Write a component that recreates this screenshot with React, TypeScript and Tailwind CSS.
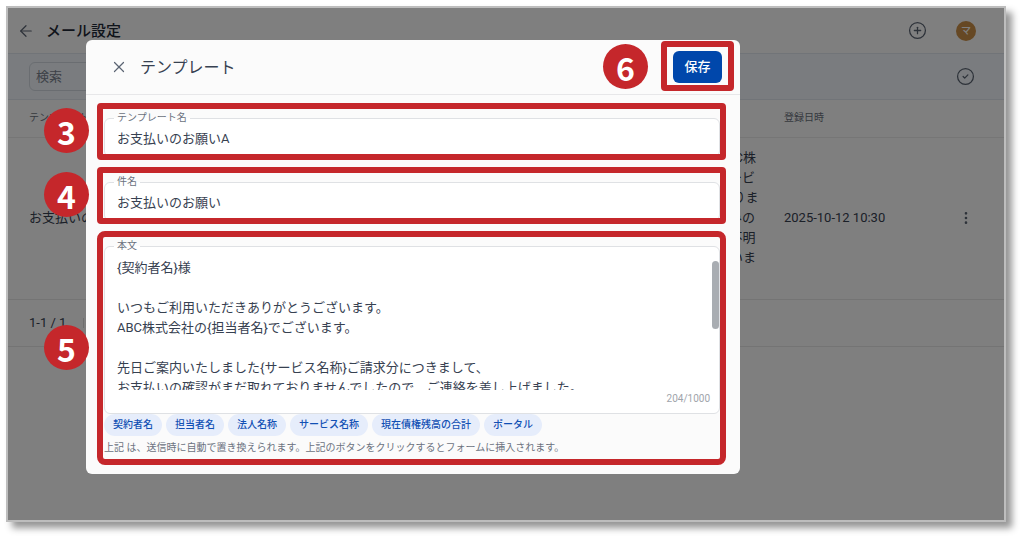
import type { ReactNode } from "react";
import { ArrowLeft, CircleCheck, CirclePlus, EllipsisVertical, X } from "lucide-react";

const placeholders = [
  "契約者名",
  "担当者名",
  "法人名称",
  "サービス名称",
  "現在債権残高の合計",
  "ポータル",
];

const listBody = `{契約者名}様 いつもご利用いただきありがとうございます。 ABC株
式会社の{担当者名}でございます。先日ご案内いたしました{サービ
ス名称}ご請求分につきまして、お支払いの確認がまだ取れておりま
せんでしたので、ご連絡を差し上げました。すでにお支払い済みの
場合は、行き違いとなりますことをご容赦ください。なお、ご不明
な点がございましたら、お手数ですが下記窓口へご連絡くださいま
せ。`;

const mailBody = `{契約者名}様

いつもご利用いただきありがとうございます。
ABC株式会社の{担当者名}でございます。

先日ご案内いたしました{サービス名称}ご請求分につきまして、
お支払いの確認がまだ取れておりませんでしたので、ご連絡を差し上げました。`;

function Badge({ n, className }: { n: number; className: string }) {
  return (
    <span
      className={`absolute flex size-[45px] items-center justify-center rounded-full bg-[#c5272b] font-['Noto_Sans_CJK_JP',sans-serif] text-[32px] leading-none font-bold text-white ${className}`}
    >
      {n}
    </span>
  );
}

function Step({
  n,
  rounded,
  badge,
  children,
}: {
  n: number;
  rounded: string;
  badge: string;
  children: ReactNode;
}) {
  return (
    <section className="relative pt-[7px] pr-[6px] pb-[3px] pl-[7px]">
      {children}
      <div className={`pointer-events-none absolute inset-0 border-6 border-[#c5272b] ${rounded}`} />
      <Badge n={n} className={badge} />
    </section>
  );
}

function Field({ id, label, children }: { id: string; label: string; children: ReactNode }) {
  return (
    <fieldset className="relative min-w-0 rounded-md border border-[#dfe1e4] bg-white pr-[9px] pb-[6px] pl-[9px]">
      <legend className="h-4 px-[3px] text-[10px] leading-4 text-[#6b7280]">
        <label htmlFor={id}>{label}</label>
      </legend>
      {children}
    </fieldset>
  );
}

function SettingsPage() {
  return (
    <div className="text-[13px] leading-5 text-[#374151]">
      <header className="flex h-[46px] items-center border-b border-[#e2e8f0] pr-[28px] pl-[9px]">
        <button type="button" aria-label="戻る" className="text-[#5b6473]">
          <ArrowLeft size={18} strokeWidth={1.6} />
        </button>
        <h1 className="ml-[11px] flex-1 text-[15px] font-medium text-[#1f2937]">メール設定</h1>
        <button type="button" aria-label="追加" className="mr-[29px] text-[#5b6473]">
          <CirclePlus size={19} strokeWidth={1.6} />
        </button>
        <button
          type="button"
          aria-label="アカウント"
          className="flex size-5 items-center justify-center rounded-full bg-[#cc9048] text-[10px] leading-none font-medium text-white"
        >
          マ
        </button>
      </header>
      <div className="flex h-[46px] items-center justify-between border-b border-[#e2e8f0] bg-[#f4f9fe] pr-[29px] pl-[21px]">
        <input
          type="search"
          aria-label="検索"
          placeholder="検索"
          className="h-[29px] w-[260px] rounded-md border border-[#d5dbe3] px-[6px] placeholder:text-[#7b8390]"
        />
        <button type="button" aria-label="選択" className="text-[#5b6473]">
          <CircleCheck size={19} strokeWidth={1.6} />
        </button>
      </div>
      <table className="w-full table-fixed text-left">
        <thead>
          <tr className="h-[37px] border-b border-[#ececec] text-[10px] text-[#6b7280]">
            <th className="w-[190px] pl-[21px] font-normal">テンプレート名</th>
            <th className="w-[168px] font-normal">件名</th>
            <th className="w-[418px] font-normal">本文</th>
            <th className="font-normal">登録日時</th>
            <th className="w-[60px]" aria-label="操作" />
          </tr>
        </thead>
        <tbody>
          <tr className="h-[162px] border-b border-[#e8e8e8]">
            <td className="pl-[21px]">お支払いのお願いA</td>
            <td>お支払いのお願い</td>
            <td className="whitespace-pre">{listBody}</td>
            <td>2025-10-12 10:30</td>
            <td>
              <button type="button" aria-label="メニュー" className="ml-[14px] block text-[#5b6473]">
                <EllipsisVertical size={16} strokeWidth={2} />
              </button>
            </td>
          </tr>
        </tbody>
      </table>
      <footer className="flex h-[47px] items-center border-b border-[#e8e8e8] pl-[21px]">
        <span className="w-[54px]">1-1 / 1</span>
        <button type="button" aria-label="前のページ" className="h-[10px] w-[30px] border-l border-[#dcdcdc]" />
      </footer>
    </div>
  );
}

function TemplateDialog() {
  return (
    <div
      role="dialog"
      aria-label="テンプレート"
      className="w-[654px] rounded-md bg-[#fbfbfb] pb-[9px] text-[13px] leading-5 text-[#374151]"
    >
      <header className="flex h-[55px] items-center border-b border-[#e7e7e9] pr-[18px] pl-6">
        <button type="button" aria-label="閉じる" className="text-[#5b6473]">
          <X size={18} strokeWidth={1.6} />
        </button>
        <h2 className="ml-3 flex-1 pt-px text-base">テンプレート</h2>
        <div className="relative">
          <button
            type="button"
            className="block h-8 w-[49px] rounded-md bg-[#0047ab] font-medium text-white"
          >
            保存
          </button>
          <div className="pointer-events-none absolute -inset-x-3 -top-[10px] -bottom-2 rounded-sm border-6 border-[#c5272b]" />
          <Badge n={6} className="top-[-7px] right-[74px]" />
        </div>
      </header>

      <form className="mr-[14px] ml-[11px] flex flex-col gap-[7px] pt-2">
        <Step n={3} rounded="rounded-sm" badge="top-[5px] left-[-53px]">
          <Field id="template-name" label="テンプレート名">
            <input
              id="template-name"
              defaultValue="お支払いのお願いA"
              className="mb-[2px] block h-[22px] w-full px-[3px] outline-none"
            />
          </Field>
        </Step>
        <Step n={4} rounded="rounded-sm" badge="top-[5px] left-[-53px]">
          <Field id="subject" label="件名">
            <input
              id="subject"
              defaultValue="お支払いのお願い"
              className="mb-[2px] block h-[22px] w-full px-[3px] outline-none"
            />
          </Field>
        </Step>
        <Step n={5} rounded="rounded-lg" badge="top-[94px] left-[-53px]">
          <Field id="body" label="本文">
            <textarea
              id="body"
              defaultValue={mailBody}
              className="mt-1 block h-[132px] w-full resize-none overflow-hidden px-[3px] outline-none"
            />
            <div className="absolute top-[7px] right-0 h-[68px] w-[7px] rounded-full bg-[#a9adb2]" />
            <p className="pt-px text-right text-[10px] leading-4 text-[#a0a4ab]">204/1000</p>
          </Field>
          <div className="flex gap-1">
            {placeholders.map((name) => (
              <button
                key={name}
                type="button"
                className="h-[22px] rounded-full bg-[#e6edfb] px-[9px] text-[10px] font-medium text-[#1150b4]"
              >
                {name}
              </button>
            ))}
          </div>
          <p className="mt-1 mb-[6px] text-[10px] leading-4 text-[#6b7280]">
            上記 は、送信時に自動で置き換えられます。上記のボタンをクリックするとフォームに挿入されます。
          </p>
        </Step>
      </form>
    </div>
  );
}

export default function App() {
  return (
    <div className="bg-white pt-[6px] pr-[18px] pb-[18px] pl-[6px] font-[Roboto,'Noto_Sans_CJK_JP',sans-serif]">
      <main className="relative min-h-[516px] overflow-hidden border-2 border-[#bdbdbd] bg-white shadow-[6px_6px_7px_rgba(0,0,0,0.42)]">
        <SettingsPage />
        <div className="absolute inset-0 flex items-start bg-black/50 pt-8 pl-[78px]">
          <TemplateDialog />
        </div>
      </main>
    </div>
  );
}
